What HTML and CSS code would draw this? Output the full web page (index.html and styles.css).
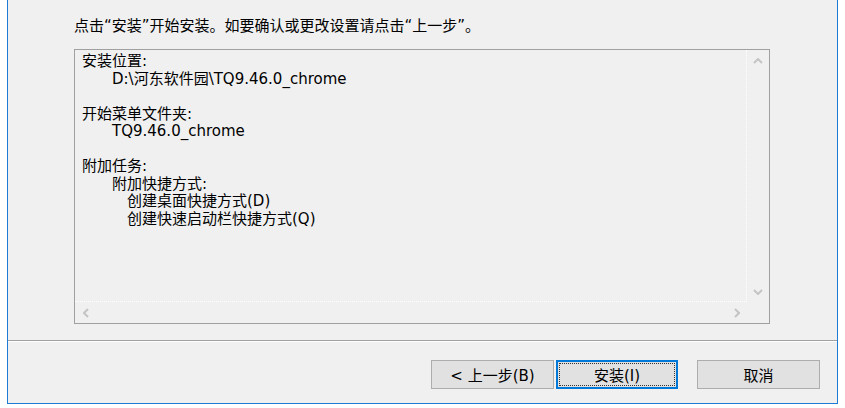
FILE: index.html
```html
<!DOCTYPE html>
<html lang="zh-CN">
<head>
  <meta charset="UTF-8">
  <meta name="viewport" content="width=device-width, initial-scale=1.0">
  <title>安装</title>
  <link rel="stylesheet" href="styles.css">
</head>
<body>
  <div class="window">
    <div class="main">
      <p class="intro">点击“安装”开始安装。如要确认或更改设置请点击“上一步”。</p>
      <div class="memo">
        <div class="memo-text">
          <div class="line">安装位置:</div>
          <div class="line ind1">D:\河东软件园\TQ9.46.0_chrome</div>
          <div class="line"></div>
          <div class="line">开始菜单文件夹:</div>
          <div class="line ind1">TQ9.46.0_chrome</div>
          <div class="line"></div>
          <div class="line">附加任务:</div>
          <div class="line ind1">附加快捷方式:</div>
          <div class="line ind2">创建桌面快捷方式(D)</div>
          <div class="line ind2">创建快速启动栏快捷方式(Q)</div>
        </div>
        <div class="vscroll">
          <span class="arrow">
            <svg width="10" height="6" viewBox="0 0 10 6"><path d="M1 5 L5 1 L9 5" fill="none" stroke="#c4c4c4" stroke-width="2"/></svg>
          </span>
          <span class="arrow">
            <svg width="10" height="6" viewBox="0 0 10 6"><path d="M1 1 L5 5 L9 1" fill="none" stroke="#c4c4c4" stroke-width="2"/></svg>
          </span>
        </div>
        <div class="hscroll">
          <span class="arrow">
            <svg width="6" height="10" viewBox="0 0 6 10"><path d="M5 1 L1 5 L5 9" fill="none" stroke="#c4c4c4" stroke-width="2"/></svg>
          </span>
          <span class="arrow">
            <svg width="6" height="10" viewBox="0 0 6 10"><path d="M1 1 L5 5 L1 9" fill="none" stroke="#c4c4c4" stroke-width="2"/></svg>
          </span>
        </div>
        <div class="corner"></div>
      </div>
    </div>
    <div class="footer">
      <button class="btn">&lt; 上一步(B)</button>
      <button class="btn btn-default">安装(I)</button>
      <button class="btn btn-cancel">取消</button>
    </div>
  </div>
</body>
</html>
```

FILE: styles.css
```css
body {
  margin: 0;
  background-color: #FFFFFF;
  font-family: 'DejaVu Sans', 'Noto Sans CJK SC', sans-serif;
  font-size: 15px;
  color: #000000;
}

.window {
  margin-left: 7px;
  width: 829px;
  height: 403px;
  background-color: #F0F0F0;
  border: 1px solid #1E7BD4;
  border-top: none;
  display: flex;
  flex-direction: column;
}

.main {
  padding: 17px 0 0 66px;
}

.intro {
  margin: 0;
  line-height: 18px;
  height: 18px;
}

.memo {
  margin-top: 14px;
  width: 696px;
  height: 275px;
  box-sizing: border-box;
  border: 1px solid #A0A0A0;
  display: grid;
  grid-template-columns: 1fr 22px;
  grid-template-rows: 1fr 21px;
}

.memo-text {
  padding: 3px 0 0 7px;
  border-right: 1px dotted #FFFFFF;
  border-bottom: 1px dotted #FFFFFF;
  overflow: hidden;
}

.line {
  height: 17.5px;
  line-height: 17.5px;
  white-space: nowrap;
}

.ind1 {
  padding-left: 30px;
}

.ind2 {
  padding-left: 45px;
}

.vscroll {
  display: flex;
  flex-direction: column;
  justify-content: space-between;
}

.hscroll {
  display: flex;
  justify-content: space-between;
}

.arrow {
  width: 21px;
  height: 21px;
  display: flex;
  align-items: center;
  justify-content: center;
}

.footer {
  margin-top: 16px;
  border-top: 1px solid #A0A0A0;
  box-shadow: inset 0 1px 0 #FFFFFF;
  padding: 19px 17px 0 0;
  display: flex;
  justify-content: flex-end;
}

.btn {
  width: 123px;
  height: 29px;
  padding: 0;
  font-family: inherit;
  font-size: 15px;
  color: #000000;
  background-color: #E1E1E1;
  border: 1px solid #ADADAD;
}

.btn-default {
  width: 122px;
  margin-left: 2px;
  border: 2px solid #0078D7;
  outline: 1px dotted #333333;
  outline-offset: -4px;
}

.btn-cancel {
  margin-left: 19px;
}
```
